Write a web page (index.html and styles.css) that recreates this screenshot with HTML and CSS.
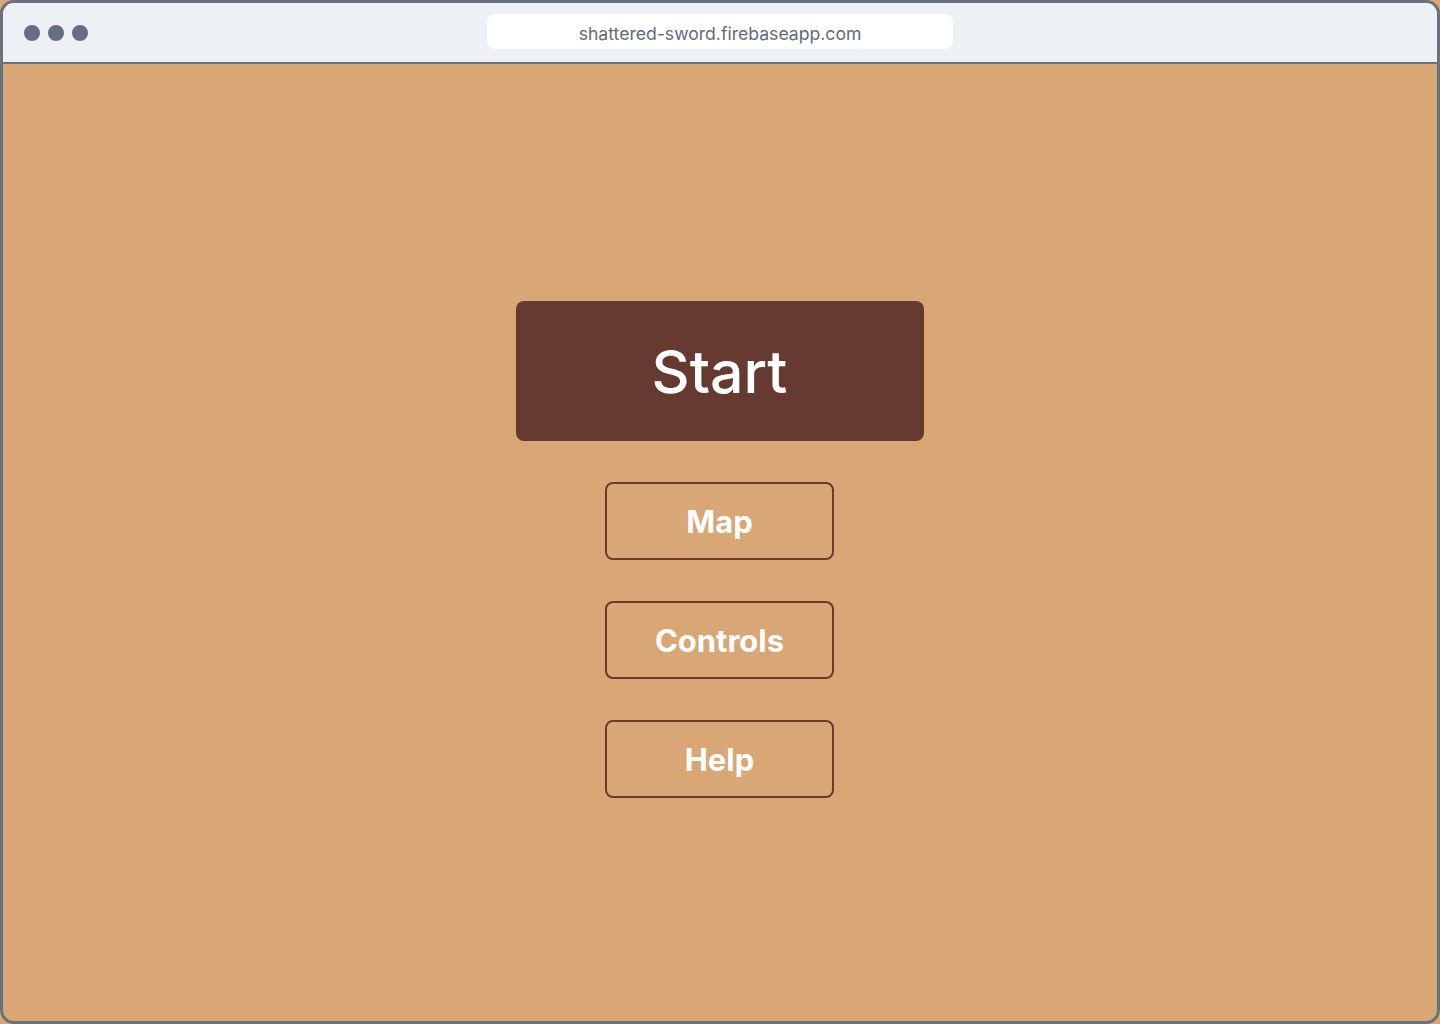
FILE: index.html
```html
<!DOCTYPE html>
<html lang="en">
<head>
<meta charset="utf-8">
<title>Shattered Sword</title>
<link rel="stylesheet" href="styles.css">
</head>
<body>
<div class="window">
  <div class="topbar">
    <div class="dots">
      <span class="dot"></span><span class="dot"></span><span class="dot"></span>
    </div>
    <div class="url">shattered-sword.firebaseapp.com</div>
  </div>
  <main class="menu">
    <button class="btn-start">Start</button>
    <button class="btn-outline">Map</button>
    <button class="btn-outline">Controls</button>
    <button class="btn-outline">Help</button>
  </main>
</div>
</body>
</html>
```
FILE: styles.css
```css
* { box-sizing: border-box; }
html, body { margin: 0; padding: 0; }
body {
  width: 1440px;
  height: 1024px;
  background: #d9a675;
  font-family: Inter, "Noto Sans", sans-serif;
  overflow: hidden;
}
.window {
  width: 1440px;
  height: 1024px;
  border: 3px solid #68717f;
  border-radius: 14px;
  overflow: hidden;
  background: #d9a675;
  display: flex;
  flex-direction: column;
}
.topbar {
  height: 61px;
  flex: none;
  background: #edf1f5;
  border-bottom: 2px solid #68717f;
  display: flex;
  align-items: center;
  position: relative;
  padding-left: 21px;
}
.dots { display: flex; gap: 8px; }
.dot {
  width: 16px;
  height: 16px;
  border-radius: 50%;
  background: #646f81;
}
.url {
  position: absolute;
  left: 484px;
  top: 11px;
  width: 466px;
  height: 35px;
  background: #ffffff;
  border-radius: 8px;
  display: flex;
  align-items: center;
  justify-content: center;
  padding-top: 3px;
  color: #616b7b;
  font-size: 17.6px;
}
.menu {
  flex: 1;
  display: flex;
  flex-direction: column;
  align-items: center;
  padding-top: 237px;
  padding-right: 1px;
  gap: 41px;
}
button { font-family: inherit; cursor: pointer; }
.btn-start {
  width: 408px;
  height: 140px;
  background: #663931;
  color: #ffffff;
  border: none;
  border-radius: 8px;
  font-size: 59px;
  font-weight: 500;
}
.btn-outline {
  width: 229px;
  height: 78px;
  background: transparent;
  border: 2px solid #6b3a2e;
  border-radius: 8px;
  color: #ffffff;
  font-size: 31px;
  font-weight: 700;
}
```
